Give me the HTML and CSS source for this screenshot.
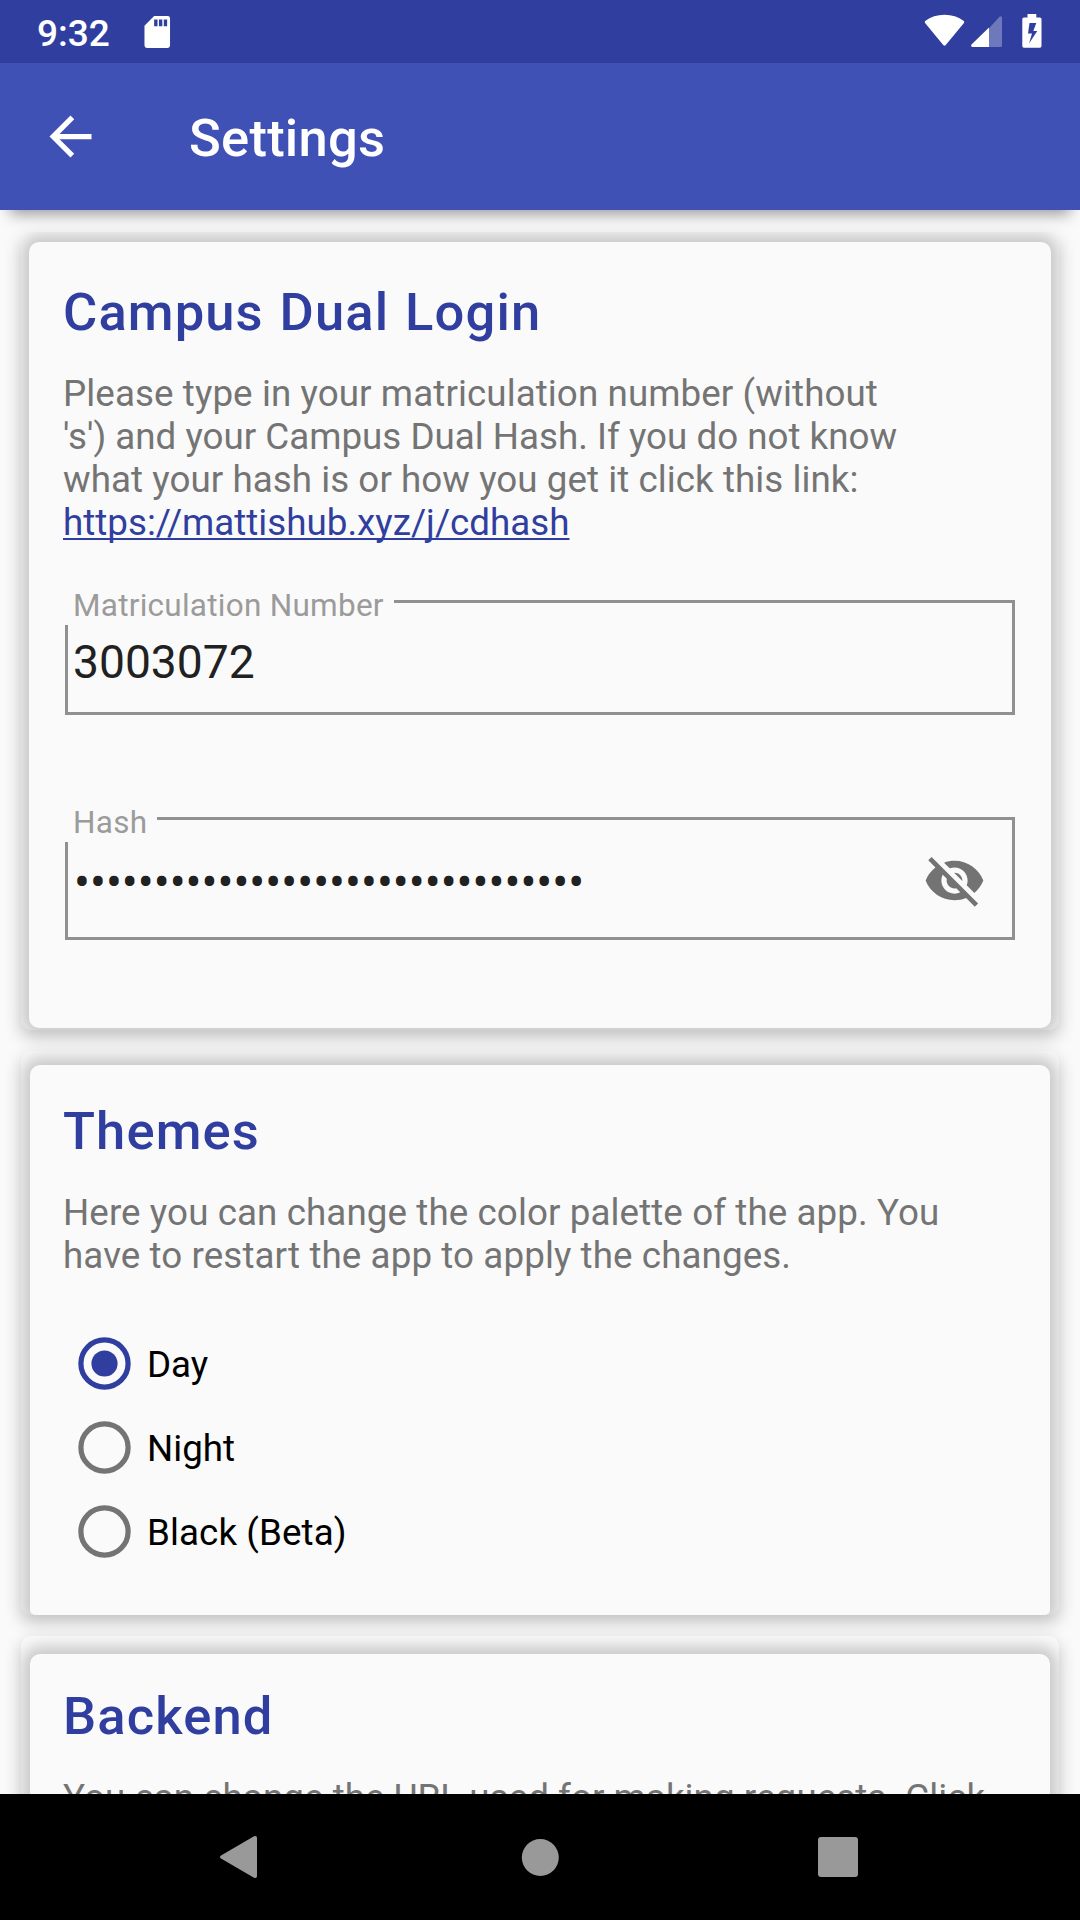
FILE: index.html
```html
<!DOCTYPE html>
<html lang="en">
<head>
<meta charset="utf-8">
<title>Settings</title>
<link rel="stylesheet" href="styles.css">
</head>
<body>
<div class="screen">
  <header class="status">
    <span class="status__time">9:32</span>
    <svg class="status__sd" viewBox="0 0 28 34"><path fill="#fff" fill-rule="evenodd" d="M10.500 .5H24.500a2.500 2.500 0 0 1 2.500 2.500V31a2.500 2.500 0 0 1-2.500 2.500H3A2.500 2.500 0 0 1 .5 31V10.500ZM10.500 4v7h3.500V4ZM15.500 4v7H19V4ZM20.500 4v7H24V4Z"/></svg>
    <span class="status__spacer"></span>
    <svg class="status__wifi" viewBox="0 0 42 33"><path fill="#fff" d="M1.200 6.800C6.800 2.400 13.500 .3 21 .3s14.200 2.100 19.800 6.500q.9.900.1 1.900L22.300 31.300q-1.300 1.400-2.600 0L1.100 8.700q-.8-1 .1-1.900Z"/></svg>
    <svg class="status__cell" viewBox="0 0 31 31"><path fill="#fff" fill-opacity=".3" d="M18 12.200 28.500 .7Q31-.7 31 2V29.500Q31 31 29.500 31H18Z"/><path fill="#fff" d="M18 11.500V31H1.500Q-.7 30.500.5 28.500Z"/></svg>
    <svg class="status__battery" viewBox="0 0 20 34"><path fill="#fff" fill-rule="evenodd" d="M5.500 0h8.800v3.500h3.500A1.700 1.700 0 0 1 19.500 5.200V32a1.700 1.700 0 0 1-1.700 1.700H2A1.700 1.700 0 0 1 .3 32V5.200A1.700 1.700 0 0 1 2 3.500h3.500ZM7.500 9 6 19.500h4L7 29.500 15.300 17h-4l3-8Z"/></svg>
  </header>

  <nav class="appbar">
    <svg class="appbar__back" viewBox="0 0 24 24"><path fill="#fff" d="M20 11H7.830l5.590-5.590L12 4l-8 8 8 8 1.410-1.410L7.830 13H20z"/></svg>
    <h1 class="appbar__title">Settings</h1>
  </nav>

  <main class="content">
    <section class="card card--login">
      <div class="card__plate">
        <h2 class="card__title">Campus Dual Login</h2>
        <p class="card__text"><span class="loose">Please type in your matriculation number (without</span><br>'s') and your Campus Dual Hash. If you do not know<br><span class="airy">what your hash is or how you get it click this link:</span><br><a class="link">https://mattishub.xyz/j/cdhash</a></p>
        <div class="field field--number">
          <div class="field__top"><span class="field__label">Matriculation Number</span><span class="field__rule"></span></div>
          <div class="field__value">3003072</div>
        </div>
        <div class="field field--hash">
          <div class="field__top"><span class="field__label">Hash</span><span class="field__rule"></span></div>
          <div class="field__value"><span class="dots">••••••••••••••••••••••••••••••••</span>
            <svg class="field__eye" viewBox="0 0 24 24"><path fill="#737373" d="M12 7c2.760 0 5 2.240 5 5 0 .65-.13 1.260-.36 1.830l2.920 2.920c1.510-1.260 2.700-2.890 3.430-4.750-1.730-4.390-6-7.500-11-7.500-1.400 0-2.740.25-3.980.7l2.160 2.160C10.740 7.130 11.350 7 12 7zM2 4.270l2.280 2.280.46.46C3.080 8.300 1.780 10.020 1 12c1.730 4.390 6 7.500 11 7.500 1.550 0 3.030-.3 4.380-.84l.42.42L19.730 22 21 20.730 3.270 3 2 4.270zM7.530 9.800l1.550 1.550c-.05.21-.08.43-.08.65 0 1.660 1.340 3 3 3 .22 0 .44-.03.65-.08l1.550 1.550c-.67.33-1.410.53-2.200.53-2.760 0-5-2.240-5-5 0-.79.2-1.530.53-2.200zm4.310-.78l3.150 3.150.02-.16c0-1.660-1.340-3-3-3l-.17.01z"/></svg>
          </div>
        </div>
      </div>
    </section>

    <section class="card card--themes">
      <div class="card__plate">
        <h2 class="card__title">Themes</h2>
        <p class="card__text"><span class="loose">Here you can change the color palette of the app. You<br>have to restart the app to apply the changes.</span></p>
        <div class="radios">
          <div class="radio"><svg class="radio__ring radio__ring--on" viewBox="0 0 53 53"><circle class="radio__outline" cx="26.500" cy="26.500" r="23.600"/><circle class="radio__dot" cx="26.500" cy="26.500" r="13.100"/></svg><span class="radio__label">Day</span></div>
          <div class="radio"><svg class="radio__ring" viewBox="0 0 53 53"><circle class="radio__outline" cx="26.500" cy="26.500" r="23.600"/></svg><span class="radio__label">Night</span></div>
          <div class="radio"><svg class="radio__ring" viewBox="0 0 53 53"><circle class="radio__outline" cx="26.500" cy="26.500" r="23.600"/></svg><span class="radio__label loose">Black (Beta)</span></div>
        </div>
      </div>
    </section>

    <section class="card card--backend">
      <div class="card__plate">
        <h2 class="card__title">Backend</h2>
        <p class="card__text airy">You can change the URL used for making requests. Click</p>
      </div>
    </section>
  </main>

  <footer class="navbar">
    <svg class="navbar__icon" viewBox="0 0 42 42"><path fill="#999" d="M37 .3Q40-.7 40 2V40q0 2.700-3 1.700L4 22.500q-2-1.500 0-3Z"/></svg>
    <svg class="navbar__icon" viewBox="0 0 42 42"><circle cx="23.300" cy="21.500" r="18.500" fill="#999"/></svg>
    <svg class="navbar__icon" viewBox="0 0 42 42"><rect x="1" y="1" width="40" height="40" rx="3" fill="#999"/></svg>
  </footer>
</div>
</body>
</html>
```
FILE: styles.css
```css
* { box-sizing: border-box; }
body {
  margin: 0;
  background: #fafafa;
  font-family: Roboto, "Liberation Sans", sans-serif;
}
h1, h2, p { margin: 0; }
svg { display: block; flex: none; }

.screen {
  width: 1080px;
  height: 1920px;
  display: flex;
  flex-direction: column;
  overflow: hidden;
}

/* status bar */
.status {
  flex: none;
  height: 63px;
  padding: 14px 38px 0 37px;
  display: flex;
  align-items: flex-start;
  background: #303f9f;
  color: #fff;
  z-index: 3;
}
.status__time {
  width: 107px;
  margin-top: -2px;
  font-size: 37px;
  line-height: 43px;
  font-weight: 500;
}
.status__sd { width: 27px; height: 34px; margin-top: 1px; }
.status__spacer { flex: 1; }
.status__wifi { width: 41px; height: 33px; }
.status__cell { width: 31px; height: 31px; margin: 2px 0 0 6px; }
.status__battery { width: 20px; height: 34px; margin-left: 20px; }

/* app bar */
.appbar {
  flex: none;
  height: 147px;
  padding-left: 39px;
  display: flex;
  align-items: center;
  background: #3f51b5;
  color: #fff;
  box-shadow: 0 14px 14px -10px rgba(0, 0, 0, .4);
  z-index: 2;
}
.appbar__back { width: 63px; height: 63px; margin-top: -1px; }
.appbar__title {
  margin: 3px 0 0 87px;
  font-size: 52.5px;
  line-height: 62px;
  font-weight: 500;
  letter-spacing: .25px;
}

/* scrolling cards */
.content {
  flex: 1;
  min-height: 0;
  padding: 22px 21px 0;
  display: flex;
  flex-direction: column;
  gap: 21px;
  overflow: hidden;
}
.card {
  flex: none;
  overflow: hidden;
  border-radius: 11px;
  background: #fafafa;
  box-shadow: 0 7px 17px rgba(0, 0, 0, .24);
}
.card--login { height: 798px; padding: 10px 8px 2px; }
.card--themes { height: 564px; padding: 14px 9px 0; }
.card--backend { height: 564px; padding: 18px 9px 0; }
.card__plate {
  height: 100%;
  padding: 39px 34px 0;
  border-radius: 10px;
  background: #fafafa;
  box-shadow: 0 0 16px 8px rgba(0, 0, 0, .2);
}
.card--themes .card__plate { padding: 35px 33px 0; border-radius: 10px 10px 5px 5px; }
.card--backend .card__plate { padding: 31px 33px 0; }
.card__title {
  color: #303f9f;
  font-size: 52.5px;
  line-height: 62px;
  font-weight: 500;
  letter-spacing: 1.12px;
  word-spacing: 1.7px;
  white-space: nowrap;
}
.card__text {
  margin-top: 29px;
  color: #747474;
  font-size: 36.75px;
  line-height: 43px;
  white-space: nowrap;
}
.loose { letter-spacing: .09px; }
.airy { letter-spacing: .05px; }
.link {
  color: #303f9f;
  text-decoration: underline;
  text-decoration-thickness: 2px;
  text-underline-offset: 3px;
  text-decoration-skip-ink: none;
}

/* outlined text fields */
.field {
  width: 950px;
  margin-left: 2px;
  display: flex;
  flex-direction: column;
  color: #212121;
}
.field--number { height: 115px; margin-top: 56px; }
.field--hash { height: 123px; margin-top: 102px; }
.field__top {
  flex: none;
  height: 25px;
  display: flex;
  padding-left: 8px;
}
.field__label {
  margin-top: -13px;
  color: #9b9b9b;
  font-size: 31.5px;
  line-height: 37px;
  letter-spacing: .26px;
  white-space: nowrap;
}
.field__rule {
  flex: 1;
  margin-left: 10px;
  border: solid #909090;
  border-width: 3px 3px 0 0;
}
.field__value {
  flex: 1;
  padding: 9px 26px 0 5px;
  display: flex;
  justify-content: space-between;
  border: solid #909090;
  border-width: 0 3px 3px;
  font-size: 46.2px;
  line-height: 56px;
}
.field--hash .field__value { padding: 13px 26px 0 6px; font-size: 47.25px; }
.field__eye { width: 63px; height: 63px; margin-top: -6px; }

/* radio group */
.radios { margin: 44px 0 0 15px; }
.radio { height: 84px; display: flex; align-items: center; gap: 16px; }
.radio__ring { width: 53px; height: 53px; color: #747474; }
.radio__ring--on { color: #303f9f; }
.radio__outline { fill: none; stroke: currentColor; stroke-width: 5.25px; }
.radio__dot { fill: currentColor; }
.radio__label { margin-top: 3px; font-size: 36.75px; line-height: 43px; color: #000; }

/* navigation bar */
.navbar {
  flex: none;
  height: 126px;
  padding: 0 221px 0 217px;
  display: flex;
  justify-content: space-between;
  align-items: center;
  background: #000;
  z-index: 2;
}
.navbar__icon { width: 42px; height: 42px; }
```
